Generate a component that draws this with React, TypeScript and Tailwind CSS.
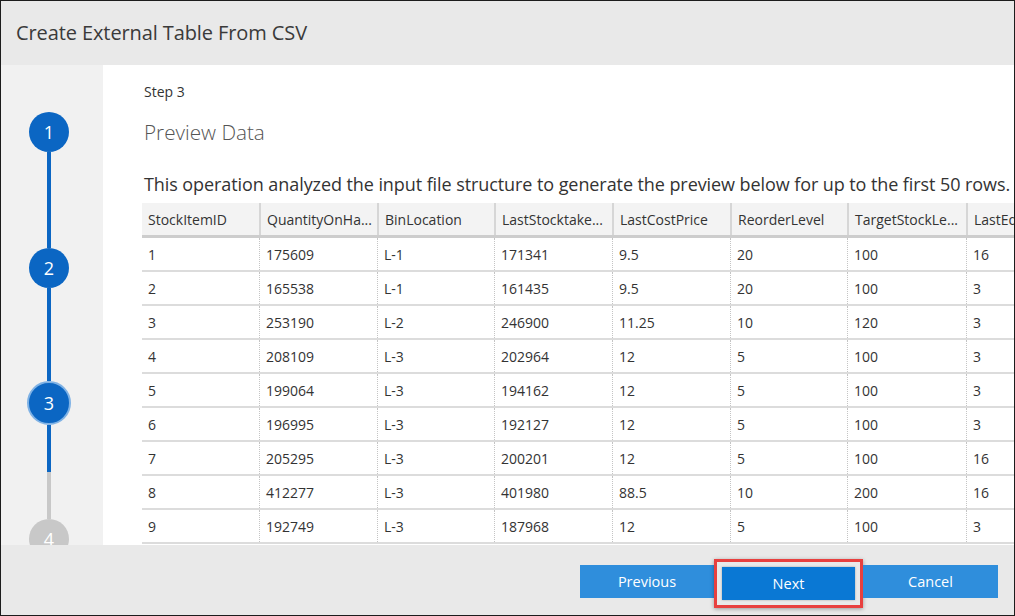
import React from "react";

const columns = [
  { label: "StockItemID", w: "w-[117px]" },
  { label: "QuantityOnHa...", w: "w-[118px]" },
  { label: "BinLocation", w: "w-[117px]" },
  { label: "LastStocktake...", w: "w-[118px]" },
  { label: "LastCostPrice", w: "w-[118px]" },
  { label: "ReorderLevel", w: "w-[117px]" },
  { label: "TargetStockLe...", w: "w-[119px]" },
  { label: "LastEd", w: "w-[117px]" },
];

const rows = [
  ["1", "175609", "L-1", "171341", "9.5", "20", "100", "16"],
  ["2", "165538", "L-1", "161435", "9.5", "20", "100", "3"],
  ["3", "253190", "L-2", "246900", "11.25", "10", "120", "3"],
  ["4", "208109", "L-3", "202964", "12", "5", "100", "3"],
  ["5", "199064", "L-3", "194162", "12", "5", "100", "3"],
  ["6", "196995", "L-3", "192127", "12", "5", "100", "3"],
  ["7", "205295", "L-3", "200201", "12", "5", "100", "16"],
  ["8", "412277", "L-3", "401980", "88.5", "10", "200", "16"],
  ["9", "192749", "L-3", "187968", "12", "5", "100", "3"],
];

function StepCircle({ n, state }: { n: number; state: "done" | "current" | "todo" }) {
  if (state === "current") {
    return (
      <div className="flex h-[44px] w-[44px] shrink-0 items-center justify-center rounded-full border-2 border-[#7fb2e5] bg-[#0b66c3] text-[18px] text-white">
        {n}
      </div>
    );
  }
  return (
    <div
      className={`flex h-[40px] w-[40px] shrink-0 items-center justify-center rounded-full text-[18px] text-white ${
        state === "done" ? "bg-[#0b66c3]" : "bg-[#c8c8c8]"
      }`}
    >
      {n}
    </div>
  );
}

export default function App() {
  return (
    <div
      className="flex h-[616px] w-[1015px] flex-col overflow-hidden border border-[#1c1c1c] bg-white text-[#333]"
      style={{ fontFamily: '"Open Sans", "Noto Sans", sans-serif' }}
    >
      {/* Header */}
      <div className="flex h-[64px] shrink-0 items-center bg-[#e9e9e9] px-[15px]">
        <h1 className="text-[20px] font-medium tracking-[-0.1px] text-[#3a3a3a]">
          Create External Table From CSV
        </h1>
      </div>

      <div className="flex min-h-0 flex-1">
        {/* Step rail */}
        <div className="flex w-[102px] shrink-0 flex-col items-center overflow-hidden bg-[#f1f1f1] pr-[6px] pt-[47px]">
          <StepCircle n={1} state="done" />
          <div className="h-[96px] w-[4px] shrink-0 bg-[#0b66c3]" />
          <StepCircle n={2} state="done" />
          <div className="h-[93px] w-[4px] shrink-0 bg-[#0b66c3]" />
          <StepCircle n={3} state="current" />
          <div className="h-[47px] w-[4px] shrink-0 bg-[#0b66c3]" />
          <div className="h-[47px] w-[4px] shrink-0 bg-[#c8c8c8]" />
          <StepCircle n={4} state="todo" />
        </div>

        {/* Content */}
        <div className="min-w-0 flex-1 overflow-hidden bg-white pl-[41px] pt-[17px]">
          <div className="text-[14px] leading-[20px] text-[#333]">Step 3</div>
          <div className="mt-[18px] text-[20.7px] font-light leading-[24px] text-[#555]">
            Preview Data
          </div>
          <p className="mt-[29px] whitespace-nowrap text-[18px] leading-[22px] tracking-[-0.08px] text-[#333]">
            This operation analyzed the input file structure to generate the preview below for up to the first 50 rows.
          </p>

          <div className="ml-[-2px] mt-[8px] w-max text-[14px] text-[#333]">
            <div className="flex h-[35px] border-b-[3px] border-[#cdcdcd] bg-[#f3f3f3]">
              {columns.map((c, i) => (
                <div
                  key={c.label}
                  className={`${c.w} flex items-center overflow-hidden whitespace-nowrap px-[6px] ${
                    i > 0 ? "border-l-2 border-[#d6d6d6]" : ""
                  }`}
                >
                  {c.label}
                </div>
              ))}
            </div>
            {rows.map((r) => (
              <div key={r[0]} className="flex h-[34px] border-b-2 border-[#dcdcdc]">
                {r.map((v, i) => (
                  <div
                    key={i}
                    className={`${columns[i].w} flex items-center px-[6px] ${
                      i > 0 ? "border-l border-dotted border-[#c4c4c4]" : ""
                    }`}
                  >
                    {v}
                  </div>
                ))}
              </div>
            ))}
          </div>
        </div>
      </div>

      {/* Footer */}
      <div className="flex h-[70px] shrink-0 items-start justify-end bg-[#e9e9e9] pr-[16px] pt-[14px] text-[14.5px] text-white">
        <button className="mt-[6px] h-[33px] w-[134px] bg-[#2f8edc]">Previous</button>
        <div className="border-[3px] border-[#e8403f] p-[5px] shadow-[0_1px_4px_rgba(0,0,0,0.35)]">
          <button className="h-[33px] w-[133px] bg-[#0a78d4] shadow-[0_0_2px_rgba(0,0,0,0.3)]">Next</button>
        </div>
        <button className="mt-[6px] h-[33px] w-[135px] bg-[#2f8edc]">Cancel</button>
      </div>
    </div>
  );
}
